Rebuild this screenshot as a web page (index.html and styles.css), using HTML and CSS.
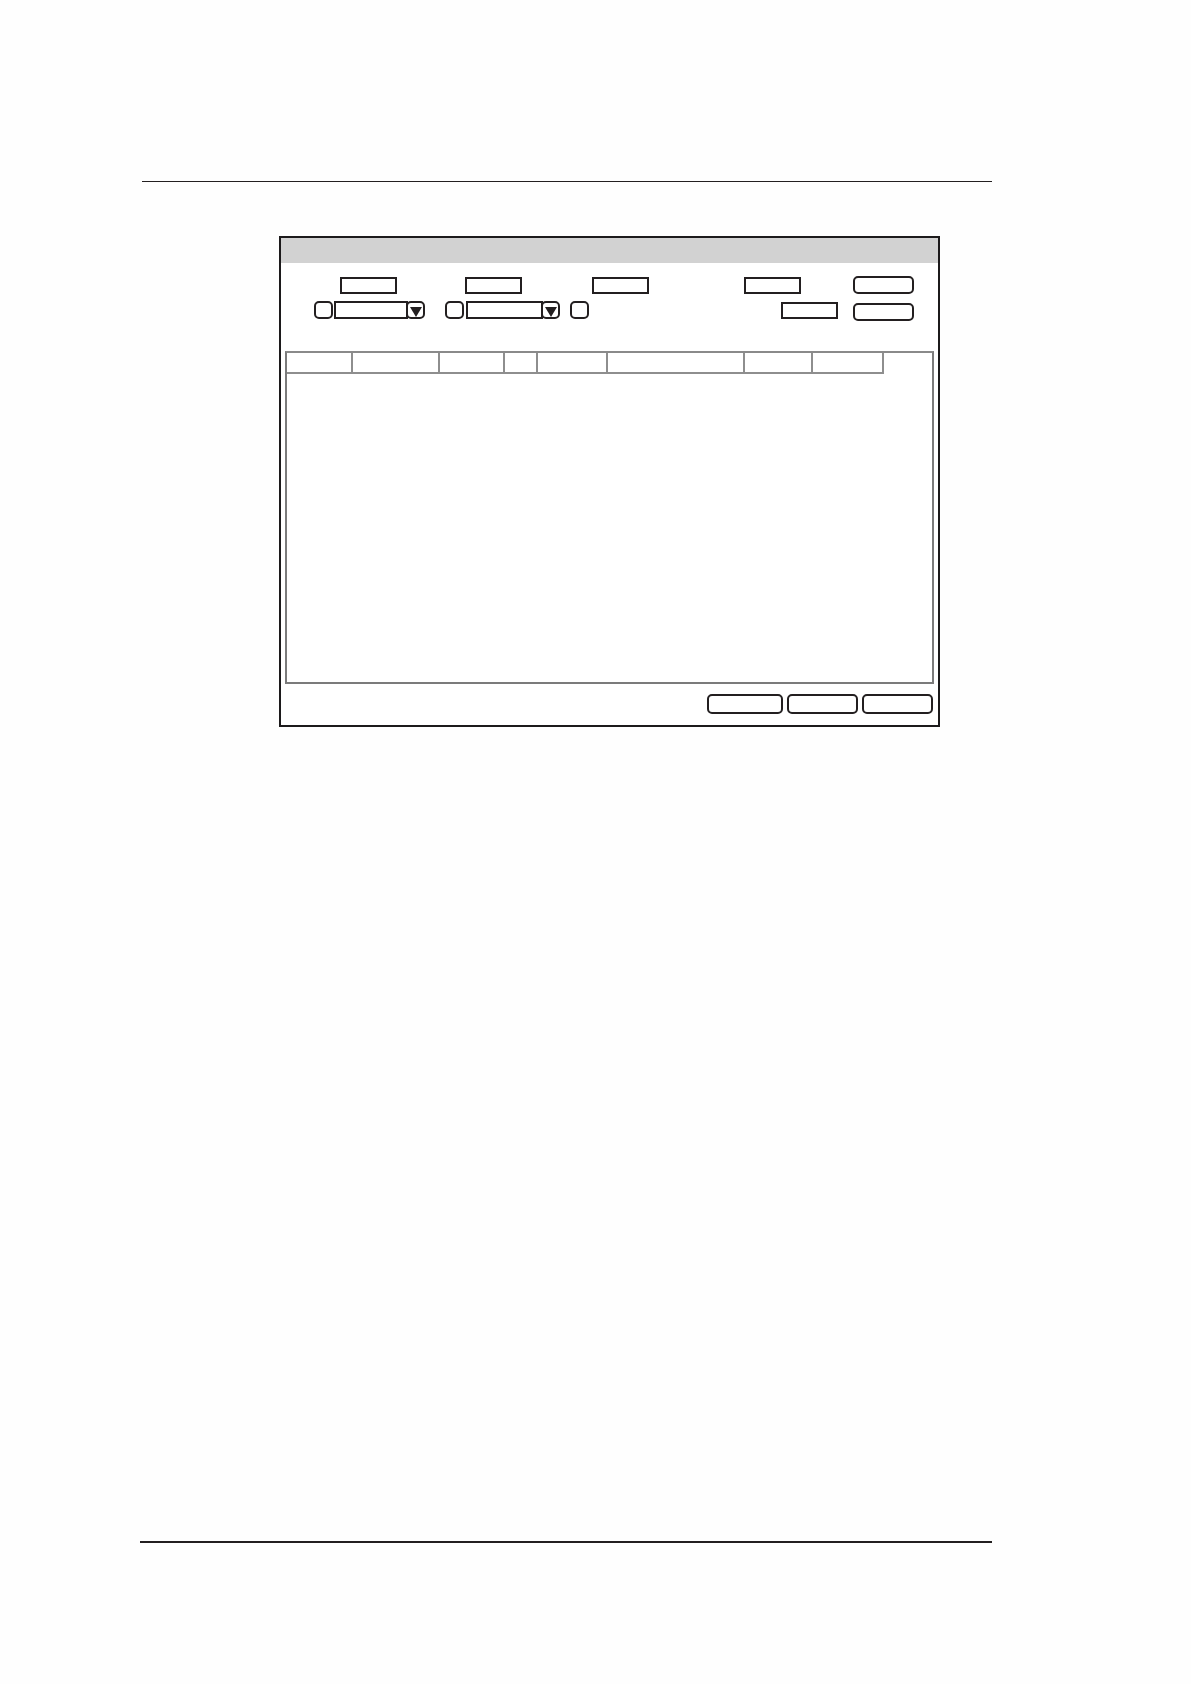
FILE: index.html
```
<!DOCTYPE html>
<html lang="en">
<head>
  <meta charset="UTF-8">
  <meta name="viewport" content="width=device-width, initial-scale=1.0">
  <title></title>
  <link rel="stylesheet" href="styles.css">
</head>
<body>

<div class="page">
  <hr class="rule rule-top">

  <form class="dialog">
    <header class="titlebar"></header>

    <!-- Filters -->
    <div class="toolbar">
      <div class="filters">
        <div class="field-row">
          <input type="text" class="field" aria-label="Field 1">
          <input type="text" class="field" aria-label="Field 2">
          <input type="text" class="field" aria-label="Field 3">
          <input type="text" class="field" aria-label="Field 4">
        </div>
        <div class="option-row">
          <div class="option">
            <input type="checkbox" class="check" aria-label="Option 1">
            <select class="combo" aria-label="List 1"></select>
            <button type="button" class="arrow" aria-label="Open list 1">
              <svg viewBox="0 0 12 10" width="12" height="10"><path d="M0 0H12L6 10Z" fill="#231f20"/></svg>
            </button>
          </div>
          <div class="option option-wide">
            <input type="checkbox" class="check" aria-label="Option 2">
            <select class="combo" aria-label="List 2"></select>
            <button type="button" class="arrow" aria-label="Open list 2">
              <svg viewBox="0 0 12 10" width="12" height="10"><path d="M0 0H12L6 10Z" fill="#231f20"/></svg>
            </button>
          </div>
          <input type="checkbox" class="check" aria-label="Option 3">
          <input type="text" class="field field-last" aria-label="Field 5">
        </div>
      </div>
      <div class="toolbar-buttons">
        <button type="button" class="btn" aria-label="Action 1"></button>
        <button type="button" class="btn" aria-label="Action 2"></button>
      </div>
    </div>

    <!-- Results -->
    <div class="list">
      <table class="list-table">
        <thead>
          <tr>
            <th class="col-1"></th>
            <th class="col-2"></th>
            <th class="col-3"></th>
            <th class="col-4"></th>
            <th class="col-5"></th>
            <th class="col-6"></th>
            <th class="col-7"></th>
            <th class="col-8"></th>
          </tr>
        </thead>
      </table>
    </div>

    <footer class="actions">
      <button type="button" class="btn btn-wide" aria-label="Action 3"></button>
      <button type="button" class="btn" aria-label="Action 4"></button>
      <button type="button" class="btn" aria-label="Action 5"></button>
    </footer>
  </form>

  <hr class="rule rule-bottom">
</div>

</body>
</html>
```
FILE: styles.css
```
* {
  box-sizing: border-box;
}
body {
  margin: 0;
  background-color: #fefefe;
  font-family: "Liberation Sans", Arial, sans-serif;
  font-size: 12px;
}
.page {
  display: flex;
  flex-direction: column;
  min-height: 100vh;
  padding: 181px 199px 141px 140px;
}
.rule {
  width: auto;
  margin: 0;
  border: none;
  background-color: #231f20;
}
.rule-top {
  height: 1px;
  margin-left: 2px;
}
.rule-bottom {
  height: 2px;
  margin-top: auto;
}
.dialog {
  margin: 54px 52px 54px 139px;
  border: 2px solid #1c1a1b;
  background-color: #ffffff;
}
.titlebar {
  height: 25px;
  background-color: #d2d2d2;
}

/* Filters */
.toolbar {
  display: flex;
  gap: 15px;
  padding: 13px 24px 30px 0;
}
.filters {
  flex: 1;
  display: flex;
  flex-direction: column;
  gap: 7px;
  padding-top: 1px;
}
.field-row {
  display: grid;
  grid-template-columns: 116fr 125fr 127fr 152fr 37fr;
  justify-items: end;
}
.field {
  width: 57px;
  height: 17px;
  padding: 0 2px;
  border: 2px solid #231f20;
  border-radius: 0;
  background-color: #ffffff;
  font: inherit;
}
.option-row {
  display: flex;
  align-items: center;
  padding-left: 33px;
}
.option {
  display: flex;
  width: 111px;
  margin-right: 20px;
}
.option-wide {
  width: 115px;
  margin-right: 10px;
}
.check {
  appearance: none;
  width: 19px;
  height: 18px;
  margin: 0;
  border: 2px solid #231f20;
  border-radius: 5px;
  background-color: #ffffff;
}
.combo {
  appearance: none;
  flex: 1;
  min-width: 0;
  height: 18px;
  margin: 0 0 0 1px;
  padding: 0 2px;
  border: 2px solid #231f20;
  border-radius: 0;
  background-color: #ffffff;
  font: inherit;
}
.option-wide .combo {
  margin-left: 2px;
}
.arrow {
  display: flex;
  justify-content: center;
  align-items: flex-end;
  width: 19px;
  height: 18px;
  margin-left: -2px;
  padding: 0;
  border: 2px solid #231f20;
  border-radius: 5px;
  background-color: #ffffff;
}
.field-last {
  margin-left: auto;
}
.toolbar-buttons {
  display: flex;
  flex-direction: column;
  gap: 9px;
  width: 61px;
}
.btn {
  height: 18px;
  padding: 0;
  border: 2px solid #231f20;
  border-radius: 5px;
  background-color: #ffffff;
  font: inherit;
}

/* Results */
.list {
  min-height: 333px;
  margin: 0 4px;
  border: 2px solid #7b7b7b;
  border-top-color: #8a8a8a;
}
.list-table {
  width: 597px;
  table-layout: fixed;
  border-collapse: separate;
  border-spacing: 0;
}
.list-table th {
  height: 21px;
  padding: 0;
  border-right: 2px solid #8e8e8e;
  border-bottom: 2px solid #8e8e8e;
}
.col-1 { width: 66px; }
.col-2 { width: 87px; }
.col-3 { width: 65px; }
.col-4 { width: 33px; }
.col-5 { width: 70px; }
.col-6 { width: 137px; }
.col-7 { width: 68px; }
.col-8 { width: 71px; }

/* Bottom buttons */
.actions {
  display: flex;
  justify-content: flex-end;
  gap: 4px;
  padding: 10px 5px 11px 4px;
}
.actions .btn {
  width: 71px;
  height: 20px;
}
.actions .btn-wide {
  width: 76px;
}
```
